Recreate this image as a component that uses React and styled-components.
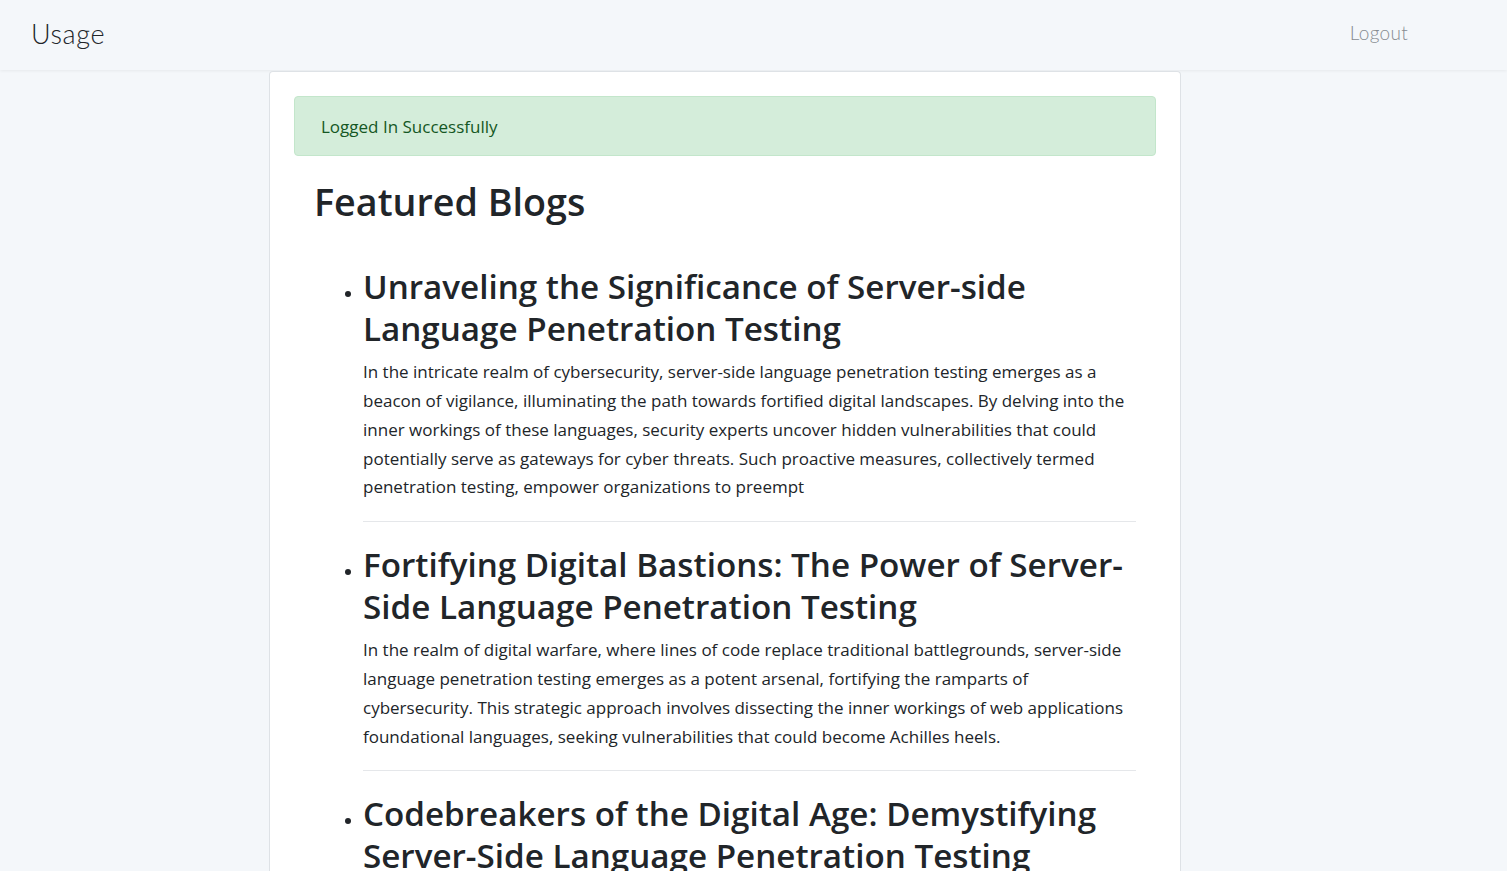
import React from "react";
import styled, { createGlobalStyle } from "styled-components";

const GlobalStyle = createGlobalStyle`
  html, body {
    margin: 0;
    padding: 0;
    background: #f4f7fa;
    font-family: "Open Sans", "Noto Sans", sans-serif;
    color: #212529;
  }
  #root {
    min-height: 100vh;
  }
`;

const Navbar = styled.nav`
  height: 70px;
  display: flex;
  align-items: center;
  justify-content: space-between;
  padding: 0 99px 0 31px;
  background: #f4f7fa;
  box-shadow: 0 1px 3px rgba(0, 0, 0, 0.06);
`;

const Brand = styled.a`
  font-family: "Lato", "Open Sans", sans-serif;
  font-size: 27px;
  font-weight: 300;
  letter-spacing: 0.6px;
  color: #212529;
  text-decoration: none;
  margin-top: -4px;
`;

const NavLink = styled.a`
  font-family: "Lato", "Open Sans", sans-serif;
  font-size: 19px;
  font-weight: 300;
  letter-spacing: 0.3px;
  color: #878c91;
  text-decoration: none;
  margin-top: -6px;
`;

const Main = styled.main`
  display: flex;
  padding: 1px 0 0 269px;
`;

const Card = styled.section`
  width: 912px;
  box-sizing: border-box;
  background: #fff;
  border: 1px solid #dee2e6;
  border-bottom: none;
  border-radius: 4px 4px 0 0;
  padding: 24px 24px 0;
  min-height: 820px;
`;

const Alert = styled.div`
  background: #d4edda;
  border: 1px solid #c3e6cb;
  border-radius: 4px;
  color: #155724;
  font-size: 17px;
  padding: 0 26px;
  height: 60px;
  box-sizing: border-box;
  display: flex;
  align-items: center;
`;

const Content = styled.div`
  padding: 0 20px;
`;

const Heading = styled.h2`
  font-size: 37.7px;
  font-weight: 600;
  margin: 23px 0 42px;
  line-height: 1.2;
`;

const BlogList = styled.ul`
  margin: 0;
  padding: 0 0 0 49px;
  list-style: disc;
`;

const BlogItem = styled.li`
  font-size: 16px;
  padding-bottom: 19px;
  margin-bottom: 22px;
  border-bottom: 1px solid #e5e7ea;
`;

const BlogTitle = styled.h3`
  display: inline;
  font-size: 33.2px;
  font-weight: 600;
  line-height: 42px;
`;

const BlogText = styled.p`
  margin: 8px 0 0;
  font-size: 17px;
  line-height: 28.8px;
  color: #212529;
`;

const blogs = [
  {
    title: "Unraveling the Significance of Server-side Language Penetration Testing",
    text: "In the intricate realm of cybersecurity, server-side language penetration testing emerges as a beacon of vigilance, illuminating the path towards fortified digital landscapes. By delving into the inner workings of these languages, security experts uncover hidden vulnerabilities that could potentially serve as gateways for cyber threats. Such proactive measures, collectively termed penetration testing, empower organizations to preempt",
  },
  {
    title: "Fortifying Digital Bastions: The Power of Server-Side Language Penetration Testing",
    text: "In the realm of digital warfare, where lines of code replace traditional battlegrounds, server-side language penetration testing emerges as a potent arsenal, fortifying the ramparts of cybersecurity. This strategic approach involves dissecting the inner workings of web applications foundational languages, seeking vulnerabilities that could become Achilles heels.",
  },
  {
    title: "Codebreakers of the Digital Age: Demystifying Server-Side Language Penetration Testing",
    text: "In the ever-evolving landscape of cybersecurity, server-side language penetration testing stands as a formidable discipline, unraveling the secrets hidden within code.",
  },
];

export default function App() {
  return (
    <>
      <GlobalStyle />
      <Navbar>
        <Brand href="#">Usage</Brand>
        <NavLink href="#">Logout</NavLink>
      </Navbar>
      <Main>
        <Card>
          <Alert>Logged In Successfully</Alert>
          <Content>
            <Heading>Featured Blogs</Heading>
            <BlogList>
              {blogs.map((b) => (
                <BlogItem key={b.title}>
                  <BlogTitle>{b.title}</BlogTitle>
                  <BlogText>{b.text}</BlogText>
                </BlogItem>
              ))}
            </BlogList>
          </Content>
        </Card>
      </Main>
    </>
  );
}
